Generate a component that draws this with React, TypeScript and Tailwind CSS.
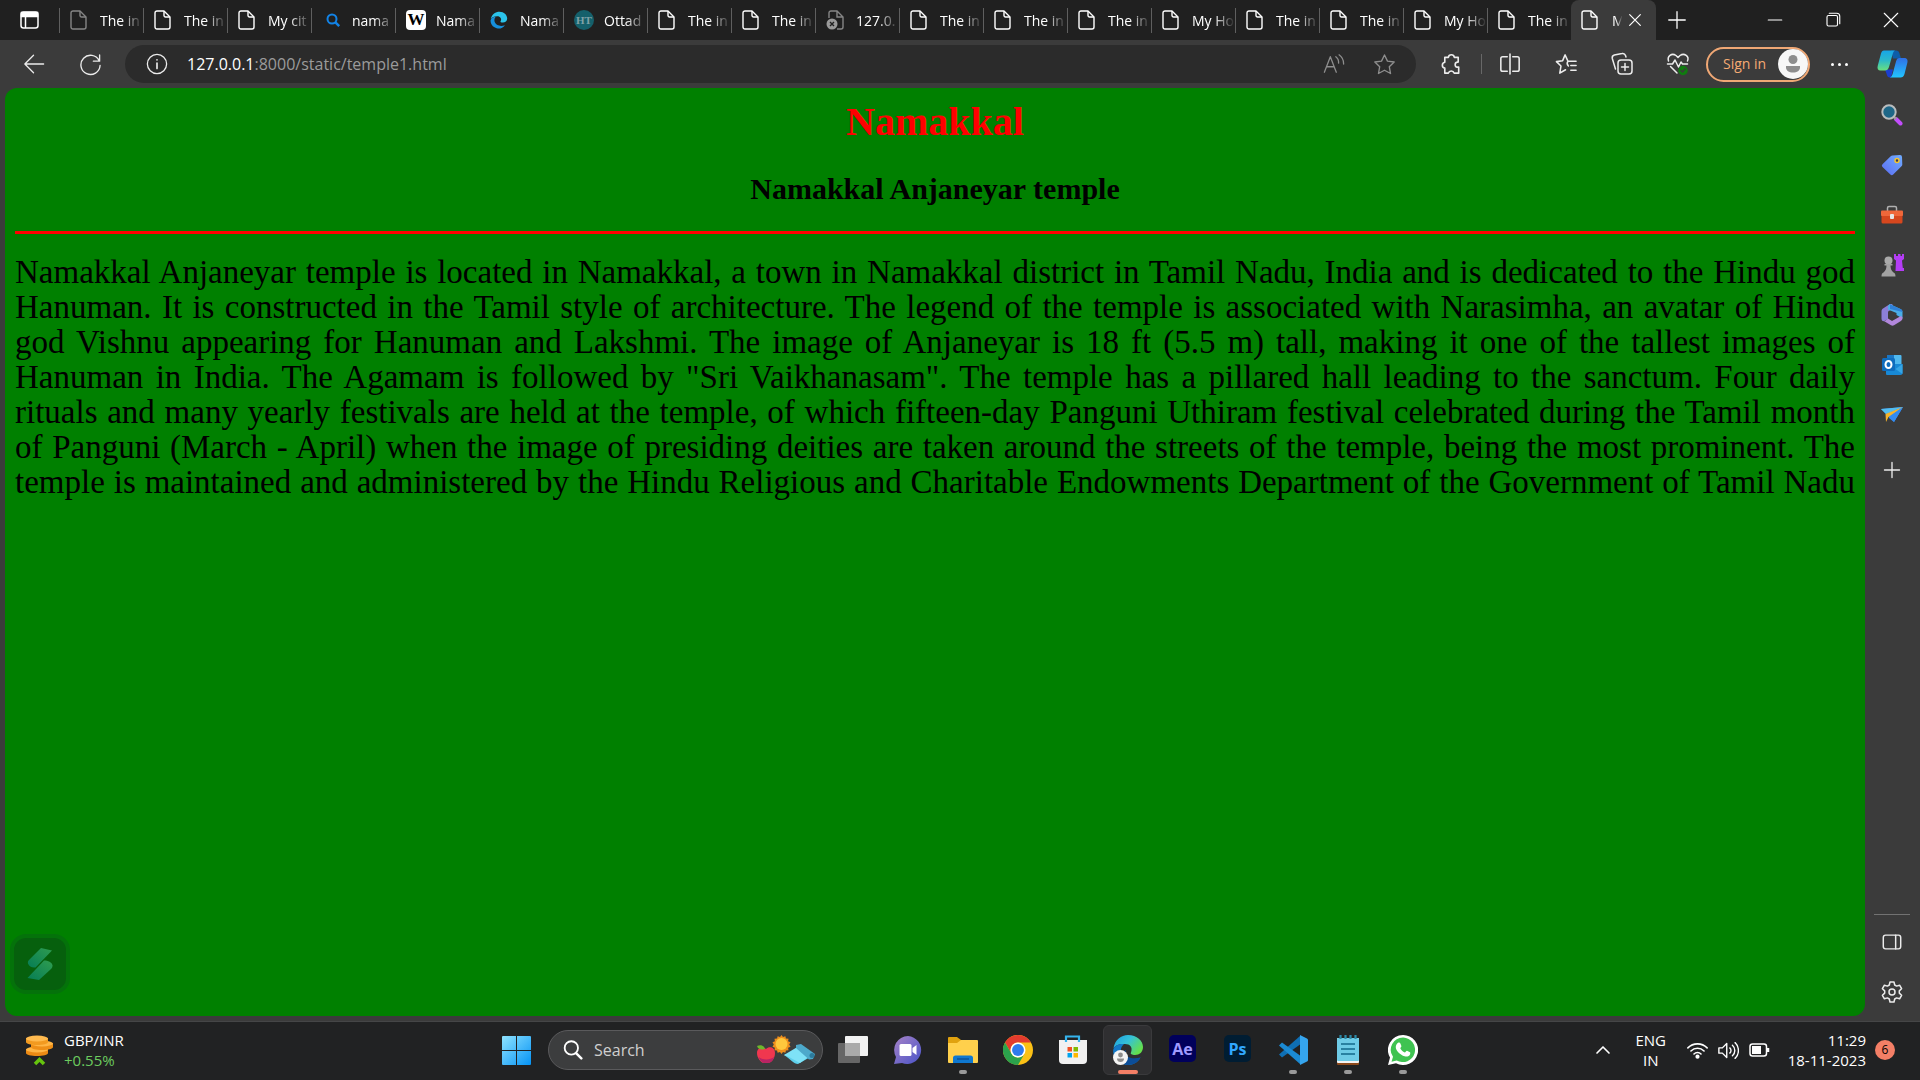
import type { ReactNode } from "react";

const LINES = [
  "Namakkal Anjaneyar temple is located in Namakkal, a town in Namakkal district in Tamil Nadu, India and is dedicated to the Hindu god",
  "Hanuman. It is constructed in the Tamil style of architecture. The legend of the temple is associated with Narasimha, an avatar of Hindu",
  "god Vishnu appearing for Hanuman and Lakshmi. The image of Anjaneyar is 18 ft (5.5 m) tall, making it one of the tallest images of",
  'Hanuman in India. The Agamam is followed by "Sri Vaikhanasam". The temple has a pillared hall leading to the sanctum. Four daily',
  "rituals and many yearly festivals are held at the temple, of which fifteen-day Panguni Uthiram festival celebrated during the Tamil month",
  "of Panguni (March - April) when the image of presiding deities are taken around the streets of the temple, being the most prominent. The",
  "temple is maintained and administered by the Hindu Religious and Charitable Endowments Department of the Government of Tamil Nadu",
];

type TabKind = "page" | "dim" | "search" | "wiki" | "edge" | "ht" | "error";

const TABS: { kind: TabKind; title: string }[] = [
  { kind: "dim", title: "The in" },
  { kind: "page", title: "The in" },
  { kind: "page", title: "My cit" },
  { kind: "search", title: "nama" },
  { kind: "wiki", title: "Nama" },
  { kind: "edge", title: "Nama" },
  { kind: "ht", title: "Ottad" },
  { kind: "page", title: "The in" },
  { kind: "page", title: "The in" },
  { kind: "error", title: "127.0." },
  { kind: "page", title: "The in" },
  { kind: "page", title: "The in" },
  { kind: "page", title: "The in" },
  { kind: "page", title: "My Ho" },
  { kind: "page", title: "The in" },
  { kind: "page", title: "The in" },
  { kind: "page", title: "My Ho" },
  { kind: "page", title: "The in" },
];

function Line({ size = 24, w = 1.4, children }: { size?: number; w?: number; children: ReactNode }) {
  return (
    <svg width={size} height={size} viewBox="0 0 24 24" fill="none" stroke="currentColor" strokeWidth={w} strokeLinecap="round" strokeLinejoin="round" aria-hidden="true" className="shrink-0">
      {children}
    </svg>
  );
}

function PageIcon() {
  return (
    <svg width="17" height="20" viewBox="0 0 17 20" fill="none" stroke="currentColor" strokeWidth="1.4" strokeLinejoin="round" className="shrink-0" aria-hidden="true">
      <path d="M1 3a2 2 0 0 1 2-2h7l6 6v10a2 2 0 0 1-2 2H3a2 2 0 0 1-2-2Z" />
      <path d="M10 1v4.500a1.500 1.500 0 0 0 1.500 1.500H16" />
    </svg>
  );
}

function TabIcon({ kind }: { kind: TabKind }) {
  if (kind === "page") return <span className="text-white"><PageIcon /></span>;
  if (kind === "dim") return <span className="text-[#858585]"><PageIcon /></span>;
  if (kind === "search")
    return (
      <svg width="20" height="20" viewBox="0 0 20 20" fill="none" stroke="#1283e6" strokeWidth="2" aria-hidden="true" className="shrink-0">
        <circle cx="10" cy="9" r="4.500" />
        <path d="m13.200 12.200 4 4" strokeWidth="2.500" />
      </svg>
    );
  if (kind === "wiki")
    return <span className="flex size-5 shrink-0 items-center justify-center rounded-sm bg-white font-['Liberation_Serif',serif] text-[17px] font-bold text-black">W</span>;
  if (kind === "edge")
    return (
      <svg width="18" height="18" viewBox="0 0 18 18" aria-hidden="true" className="shrink-0">
        <path d="M.8 8C2 3 5.500.8 9.500.8c4.500 0 7.700 3.200 7.700 6.700 0 2.600-2 4-4.300 4-1.700 0-2.900-.5-2.300-1.300 1.500-2.300-.3-5-3.300-5C4 5.200 1.800 6.500.8 8Z" fill="#2bc3ea" />
        <path d="M.6 9.200C1 7 3.300 5.800 5.800 5.800 4.300 7.300 4 9.500 5 11.600c1.500 3 5.500 4.200 10 2.600C12 18.500 7.500 18 4.500 16.300 1.800 14.700.3 12 .6 9.200Z" fill="#168fdc" />
      </svg>
    );
  if (kind === "ht")
    return <span className="flex size-5 shrink-0 items-center justify-center rounded-full bg-[#15606b] font-['Liberation_Serif',serif] text-[11px] font-bold text-[#7ea1a6]">HT</span>;
  return (
    <svg width="18" height="20" viewBox="0 0 18 20" fill="none" stroke="#858585" strokeWidth="1.400" aria-hidden="true" className="shrink-0">
      <path d="M3 8V3a2 2 0 0 1 2-2h6l6 6v10a2 2 0 0 1-2 2h-4M11 1v6h6" />
      <circle cx="6" cy="14" r="5.500" fill="#9a9a9a" stroke="none" />
      <path d="m4 12 4 4m0-4-4 4" stroke="#222" />
    </svg>
  );
}

function TabStrip() {
  return (
    <div className="flex h-10 items-stretch bg-[#202020] text-white">
      <button aria-label="Tab actions" className="flex w-[59px] shrink-0 items-center justify-center">
        <svg width="19" height="18" viewBox="0 0 19 18" fill="none" stroke="white" strokeWidth="1.500" aria-hidden="true">
          <rect x="1" y="1" width="17" height="16" rx="2.500" />
          <path d="M1.500 1.500h16v4h-16z" fill="white" />
          <path d="M5.500 6v11" />
        </svg>
      </button>
      {TABS.map((t, i) => (
        <button key={i} className="flex min-w-0 flex-[0_1_84px] items-center">
          <span className="h-[25px] w-px shrink-0 bg-[#5f5f5f]" />
          <span className="ml-[10px] flex w-5 shrink-0 items-center"><TabIcon kind={t.kind} /></span>
          <span className="ml-[10px] min-w-0 flex-1 overflow-hidden whitespace-nowrap text-left text-[14px] mask-r-from-50% mask-r-to-100%">{t.title}</span>
        </button>
      ))}
      <div className="flex w-[85px] shrink-0 items-center rounded-t-lg bg-[#3b3b3b] pl-[10px]">
        <PageIcon />
        <span className="ml-[14px] w-[13px] overflow-hidden text-[14px] mask-r-from-30% mask-r-to-80%">M</span>
        <button aria-label="Close tab" className="ml-[2px]"><Line size={16} w={1.800}><path d="m4 4 16 16M20 4 4 20" /></Line></button>
      </div>
      <button aria-label="New tab" className="flex w-[41px] shrink-0 items-center justify-center"><Line size={22} w={1.400}><path d="M12 3v18M3 12h18" /></Line></button>
      <div className="flex-1" />
      <button aria-label="Minimize" className="flex w-[58px] shrink-0 items-center justify-center"><Line size={18} w={1.500}><path d="M3 12h18" /></Line></button>
      <button aria-label="Restore" className="flex w-[58px] shrink-0 items-center justify-center">
        <Line size={18} w={1.500}><rect x="4" y="6" width="14" height="14" rx="2" /><path d="M7 3h10a4 4 0 0 1 4 4v10" /></Line>
      </button>
      <button aria-label="Close" className="flex w-[58px] shrink-0 items-center justify-center"><Line size={18} w={1.500}><path d="m3 3 18 18M21 3 3 21" /></Line></button>
    </div>
  );
}

function Tool({ label, children }: { label: string; children: ReactNode }) {
  return <button aria-label={label} className="flex h-10 w-14 shrink-0 items-center justify-center">{children}</button>;
}

function Copilot() {
  return (
    <svg width="31" height="28" viewBox="0 0 31 28" aria-hidden="true">
      <defs>
        <linearGradient id="cpA" x1="0" y1="0" x2="0" y2="1"><stop offset="0" stopColor="#17a5e8" /><stop offset=".5" stopColor="#2cb9c9" /><stop offset="1" stopColor="#6ae07e" /></linearGradient>
        <linearGradient id="cpB" x1="0" y1="0" x2="0" y2="1"><stop offset="0" stopColor="#2f6fe6" /><stop offset="1" stopColor="#22c5ff" /></linearGradient>
      </defs>
      <path d="M14 .5h5c2 0 3 1 3.500 3l1.500 5h-8Z" fill="#0d5da8" />
      <path d="M8 19.500h8l-2 8h-1c-2 0-2.700-1-3.200-3Z" fill="#1b3fd0" />
      <path d="M7 .5h11c-1.600.8-2 2.500-2.600 4.500L12 17c-.8 2.500-2 3.500-4 3.500H3.500C1 20.500 0 18.500.7 16L4 3.500C4.600 1.500 5.500.5 7 .5Z" fill="url(#cpA)" />
      <path d="M22.500 8H27c3 0 4 2 3.400 4.500L27.500 24c-.7 2.500-2 3.500-4 3.500H13c1.800-.8 2.300-2.300 2.900-4.500L19 11.500C19.700 9 20.600 8 22.500 8Z" fill="url(#cpB)" />
    </svg>
  );
}

function Toolbar() {
  return (
    <div className="flex h-12 items-center pl-[6px] text-[#ececec]">
      <Tool label="Back"><Line size={22}><path d="M22.500 12H2.500M11.500 2.500 2 12l9.500 9.500" /></Line></Tool>
      <Tool label="Reload"><Line size={23}><path d="M21 8a10 10 0 1 0 1 5M21.500 2v6.500H15" /></Line></Tool>
      <div className="ml-[7px] flex h-[38px] flex-1 items-center rounded-full bg-[#2b2b2b] pl-[21px]">
        <button aria-label="Site information"><Line size={22}><circle cx="12" cy="12" r="10.500" /><path d="M12 11v6M12 7.400v.2" strokeWidth="1.800" /></Line></button>
        <div className="ml-[19px] flex-1 text-base text-[#9b9b9b]" role="textbox" aria-label="Address" tabIndex={0}>
          <span className="text-white">127.0.0.1</span>:8000/static/temple1.html
        </div>
        <button aria-label="Read aloud" className="flex w-[50px] justify-center text-[#8e8e8e]">
          <Line size={22}><path d="m1.500 21 6.500-17 6.500 17M4 15h8M14 4a8 8 0 0 1 3 7M17.500 2a12 12 0 0 1 5 10" /></Line>
        </button>
        <button aria-label="Add to favorites" className="mr-[7px] flex w-[50px] justify-center text-[#8e8e8e]">
          <Line size={23}><path d="m12 2 3.100 6.500 7 .9-5.100 4.900 1.300 7.100L12 18l-6.300 3.400L7 14.300 1.900 9.400l7-.9Z" /></Line>
        </button>
      </div>
      <span className="w-[7px]" />
      <Tool label="Extensions">
        <Line size={23} w={1.700}><path d="M5 4.500h3.700a3.200 3.200 0 0 1 6.300 0h4V9.500h-1a2.700 2.700 0 0 0 0 5.300h1.500V21h-4.700a3.200 3.200 0 0 0-6.100 0H5v-5.200a3.100 3.100 0 0 1 0-6.100Z" /></Line>
      </Tool>
      <span className="ml-[2px] h-5 w-px bg-[#686868]" />
      <Tool label="Split screen"><Line size={22} w={1.700}><path d="M9 4H4a2 2 0 0 0-2 2v12a2 2 0 0 0 2 2h5M15 4h5a2 2 0 0 1 2 2v12a2 2 0 0 1-2 2h-5M12 1v22" /></Line></Tool>
      <Tool label="Favorites"><Line size={23} w={1.600}><path d="M14 8.500h8M16.500 13H22M16.500 18H22M13 7.500 10.500 2 8 8l-6.500 1 4.700 4.600L5 21l6-3.500M13.500 8.500c-1 1.500-1 3.500.5 5" /></Line></Tool>
      <Tool label="Collections"><Line size={24} w={1.500}><rect x="8" y="8" width="14" height="14" rx="3" /><path d="M15 11.500v7M11.500 15h7M5.500 17 2.300 6.500a3 3 0 0 1 2-3.500L12 1.500a3 3 0 0 1 3.500 2L16 5" /></Line></Tool>
      <Tool label="Browser essentials">
        <Line size={24} w={1.500}>
          <path d="M2.500 9C1 4.500 5.500.5 10 3.500l2 2 2-2c4.500-3 9.500 1 7.500 5.500M1.500 12h5L9 8l3.500 7L15 10l1.500 2h5M4.500 14.500 11 21" />
          <circle cx="17" cy="18.500" r="4" fill="#107c10" stroke="#107c10" /><path d="m15 18.500 1.500 1.500 2.500-3" stroke="#3b3b3b" />
        </Line>
      </Tool>
      <button className="flex h-[35px] w-[104px] shrink-0 items-center justify-between rounded-full border-2 border-[#f0a875] pl-[15px] text-sm text-[#f5aa74]">
        <span className="whitespace-nowrap">Sign in</span>
        <svg width="30" height="30" viewBox="0 0 30 30" aria-hidden="true" className="shrink-0">
          <circle cx="15" cy="15" r="15" fill="#f7f7f7" /><circle cx="15" cy="10.500" r="4.500" fill="#8d8d8d" />
          <path d="M8 17h14v1.500c0 3-3 5-7 5s-7-2-7-5Z" fill="#8d8d8d" />
        </svg>
      </button>
      <button aria-label="Settings and more" className="flex h-10 w-[55px] shrink-0 items-center justify-center gap-1 pl-1">
        <span className="size-[3px] rounded-full bg-white" /><span className="size-[3px] rounded-full bg-white" /><span className="size-[3px] rounded-full bg-white" />
      </button>
      <button aria-label="Copilot" className="flex w-[55px] shrink-0 items-center justify-center"><Copilot /></button>
    </div>
  );
}

function SideButton({ label, children }: { label: string; children: ReactNode }) {
  return <button aria-label={label} className="flex h-[50px] w-full items-center justify-center">{children}</button>;
}

function Sidebar() {
  return (
    <div className="flex w-[55px] shrink-0 flex-col items-center pt-[2px] pr-[1px] pb-1 text-[#ececec]">
      <SideButton label="Search">
        <svg width="22" height="22" viewBox="0 0 22 22" aria-hidden="true"><path d="m15 15 4.500 4.500" stroke="#c24dfb" strokeWidth="4" strokeLinecap="round" /><path d="m12 12 3 3" stroke="#999" strokeWidth="2.500" /><circle cx="8" cy="8" r="6.700" fill="#1e6788" stroke="#b9bcbe" strokeWidth="2" /></svg>
      </SideButton>
      <SideButton label="Shopping">
        <svg width="22" height="22" viewBox="0 0 22 22" aria-hidden="true"><defs><linearGradient id="tag" x1="0" y1="1" x2="1" y2="0"><stop stopColor="#5b6cf2" /><stop offset="1" stopColor="#70adff" /></linearGradient></defs><path d="M11.500 1.500 19 1a2 2 0 0 1 2 2l.3 7.500c0 .8-.3 1.300-.8 1.800l-8.300 8.300a2 2 0 0 1-2.800 0L1.500 13a2 2 0 0 1 0-2.800l8.200-8c.5-.5 1-.7 1.800-.7Z" fill="url(#tag)" /><circle cx="16" cy="6.500" r="2" fill="#3a3a55" stroke="#f4c430" strokeWidth="1.500" /></svg>
      </SideButton>
      <SideButton label="Tools">
        <svg width="24" height="20" viewBox="0 0 24 20" aria-hidden="true"><path d="M7.500 6V3a1.500 1.500 0 0 1 1.500-1.500h6A1.500 1.500 0 0 1 16.500 3v3" fill="none" stroke="#b0b0b0" strokeWidth="1.500" /><rect x="1.500" y="6" width="21" height="12.500" rx="1.500" fill="#d6471e" /><rect x="1" y="5.500" width="22" height="5.500" rx="1" fill="#f0673a" /><rect x="10" y="9" width="4" height="5" rx="1" fill="#e5e5e5" /></svg>
      </SideButton>
      <SideButton label="Games">
        <svg width="23" height="23" viewBox="0 0 23 23" aria-hidden="true"><path d="M13 0h2v2h2V0h2.500v2h1.500V0H23v5l-2 1.500.8 7.500H23v3h-8.500L15 6.500 13 5Z" fill="#b43df5" /><circle cx="7.500" cy="6.500" r="4" fill="#aaa" /><path d="M3.500 10h8v1.500h-2c0 3 .8 5 3 7 1.300.5 2 1.700 2 4H.5c0-2.300.7-3.500 2-4 2.200-2 3-4 3-7h-2Z" fill="#a2a2a2" /></svg>
      </SideButton>
      <SideButton label="Microsoft 365">
        <svg width="22" height="22" viewBox="0 0 22 22" aria-hidden="true"><path d="M9 0 2 4.500C1 5.200.5 6 .5 7.500v7c0 2 1 3 3 2.500l3.500-2V8.500C7 7 8 6.500 10 6l2-4c0-1.500-1.500-2.500-3-2Z" fill="#8c7fd8" /><path d="M9 .2 19.500 5c1.300.7 2 1.500 2 3v6.500l-6-3.500V9L7 5.500V3C7 1.500 8 .5 9 .2Z" fill="#4aaee8" /><path d="M2 16.500 10 21.300c1 .5 2 .5 3 0l6.500-4c1.500-1 2-2 2-3.300s-1-2.300-2.500-1.500L11 17 7 14.500 4 17Z" fill="#b287dc" /><path d="M9 .2 19.500 5c1.300.7 2 1.500 2 3L9 5Z" fill="#2f80d8" /></svg>
      </SideButton>
      <SideButton label="Outlook">
        <svg width="22" height="22" viewBox="0 0 22 22" aria-hidden="true"><rect x="6" y="1" width="14.500" height="12" rx="1" fill="#50b8ee" /><path d="M6 1h7v6H6z" fill="#1b76c4" /><path d="M5 10h16.500v9a2 2 0 0 1-2 2H6a1 1 0 0 1-1-1Z" fill="#1889d6" /><path d="m21.500 10-7 5 7 5Z" fill="#35a5e5" /><rect x="1" y="4" width="13" height="13" rx="1.500" fill="#0f6cbd" /><ellipse cx="7.500" cy="10.500" rx="3" ry="3.500" fill="none" stroke="#fff" strokeWidth="2" /></svg>
      </SideButton>
      <SideButton label="Drop">
        <svg width="24" height="20" viewBox="0 0 24 20" aria-hidden="true"><path d="M1 4 23 2 14 17Z" fill="#2f8df5" /><path d="M1 4 23 2 6 9Z" fill="#53bdf0" /><path d="M5.500 9 23 2 8.500 12 6 17Z" fill="#f6b42a" /><path d="M9 12 23 2 14 17 9 13Z" fill="#338bf0" /></svg>
      </SideButton>
      <div className="h-[5px]" />
      <SideButton label="Customize"><Line size={20} w={1.600}><path d="M12 3v18M3 12h18" /></Line></SideButton>
      <div className="flex-1" />
      <div className="mb-[2px] h-px w-9 bg-[#727272]" />
      <SideButton label="Hide sidebar"><Line size={22} w={1.600}><rect x="2.500" y="4.500" width="19" height="15" rx="2.500" /><path d="M16 4.500v15" /></Line></SideButton>
      <SideButton label="Settings">
        <Line size={24} w={1.500}><circle cx="12" cy="12" r="3" /><path d="M10 2h4l.7 3 1.900 1.100 3-.9 2 3.500-2.300 2.200v2.200l2.300 2.200-2 3.500-3-.9-1.900 1.100-.7 3h-4l-.7-3-1.900-1.100-3 .9-2-3.500 2.300-2.200v-2.200L2.400 8.700l2-3.500 3 .9L9.300 5Z" /></Line>
      </SideButton>
    </div>
  );
}

function Article() {
  return (
    <main className="relative flex-1 rounded-xl bg-[#008000] px-[10px] pt-[11px] font-['Liberation_Serif',serif] text-black">
      <h1 className="text-center text-[40px] leading-[45px] font-bold text-[#ff0000]">Namakkal</h1>
      <h2 className="mt-7 text-center text-[30px] leading-[34px] font-bold">Namakkal Anjaneyar temple</h2>
      <hr className="mt-[25px] h-[3px] border-0 bg-[#ff0000]" />
      <p className="mt-[21px] text-[33px] leading-[35px]">
        {LINES.map((l) => (
          <span key={l} className="block text-justify [text-align-last:justify]">{l}</span>
        ))}
      </p>
      <button aria-label="Open assistant" className="absolute bottom-[22px] left-[5px] flex size-[60px] items-center justify-center rounded-2xl border-4 border-[#04720a] bg-[#06600d]">
        <svg width="26" height="34" viewBox="0 0 26 34" aria-hidden="true">
          <defs><linearGradient id="ext" x1="1" y1="0" x2="0" y2="1"><stop stopColor="#2f9c50" /><stop offset="1" stopColor="#067d55" /></linearGradient></defs>
          <path d="m14 1 11 2.500L8.500 20.500C5 21 2 19.500 1 16.500c-.3-1.500 0-2.500 1-3.500Z" fill="url(#ext)" />
          <path d="M12 33 .5 31 17 13.500c4 0 8 1.500 8.500 5 0 1.500-.5 2.500-1.500 3.500Z" fill="url(#ext)" />
        </svg>
      </button>
    </main>
  );
}

function TaskApp({ label, dot, active, children }: { label: string; dot?: boolean; active?: boolean; children: ReactNode }) {
  return (
    <button aria-label={label} className="relative flex h-[50px] w-[55px] shrink-0 items-center justify-center">
      {active && <span className="absolute inset-y-0 inset-x-[3px] rounded-md border border-[#3a3a3c] bg-[#2f2f31]" />}
      <span className="relative">{children}</span>
      {dot && <span className="absolute bottom-[1px] h-1 w-2 rounded-full bg-[#9a9a9a]" />}
      {active && <span className="absolute bottom-[1px] h-1 w-5 rounded-full bg-[#f47f66]" />}
    </button>
  );
}

function Taskbar() {
  return (
    <footer className="flex h-[59px] shrink-0 items-center border-t border-[#454647] bg-[#212223] pb-[2px] text-[15px] text-white">
      <div className="flex flex-1 items-center">
        <button className="ml-[25px] flex items-center gap-[10px] text-left">
          <svg width="29" height="32" viewBox="0 0 29 32" aria-hidden="true">
            <path d="M1 15v4c0 2 5 3 11 3s11-1 11-3v-4Z" fill="#ec8a14" /><ellipse cx="12" cy="15.500" rx="11" ry="3" fill="#ffb545" />
            <path d="M6 9v4c0 2 5 3 11 3s11-1 11-3V9Z" fill="#ee8f17" /><ellipse cx="17" cy="9.500" rx="11" ry="3" fill="#ffb545" />
            <path d="M1 4v4c0 2 5 3 11 3s11-1 11-3V4Z" fill="#f29a20" /><ellipse cx="12" cy="4.500" rx="11" ry="3" fill="#ffba4f" />
            <path d="m10 30 4.500-4.500L19 30" fill="none" stroke="#66c40e" strokeWidth="3.500" />
          </svg>
          <span><span className="block leading-5">GBP/INR</span><span className="block leading-5 text-[#6ccb5f]">+0.55%</span></span>
        </button>
      </div>
      <div className="flex shrink-0 items-center pr-[2px]">
        <button aria-label="Start" className="flex h-[50px] w-[60px] items-center justify-center pr-[3px]">
          <svg width="29" height="29" viewBox="0 0 29 29" aria-hidden="true"><defs><linearGradient id="win" x1="0" y1="0" x2="29" y2="29" gradientUnits="userSpaceOnUse"><stop stopColor="#8fe3ff" /><stop offset="1" stopColor="#0593f5" /></linearGradient></defs><path d="M0 1a1 1 0 0 1 1-1h13v14H0ZM15 0h13a1 1 0 0 1 1 1v13H15ZM0 15h14v14H1a1 1 0 0 1-1-1ZM15 15h14v13a1 1 0 0 1-1 1H15Z" fill="url(#win)" /></svg>
        </button>
        <label className="flex h-10 w-[275px] items-center rounded-full border border-[#5a5a5c] bg-[#3c3d3e] pr-[6px] pl-[14px]">
          <Line size={20} w={2.200}><circle cx="10" cy="9.500" r="8" /><path d="m16 16 6 6" strokeWidth="3" /></Line>
          <input aria-label="Search" placeholder="Search" className="ml-[11px] w-0 flex-1 bg-transparent text-base text-white outline-none placeholder:text-[#cfcfcf]" />
          <svg width="60" height="30" viewBox="0 0 60 30" aria-hidden="true">
            <path d="m25.500 0 1.500 2 2.400-.8.500 2.400 2.600.2-.4 2.500 2.400 1-1.300 2.200 1.300 2.200-2.400 1 .4 2.500-2.600.2-.5 2.400-2.400-.8-1.500 2-1.500-2-2.400.8-.5-2.400-2.600-.2.400-2.500-2.400-1 1.300-2.200-1.300-2.200 2.400-1-.4-2.500 2.600-.2.500-2.400 2.400.8Z" fill="#ef8f1c" />
            <circle cx="25.500" cy="9" r="6" fill="#ffc83d" />
            <path d="M10 14c3-3 9-2 9 4 0 6-4 10-7 10-1 0-2-.3-3 0-4 .5-8-5-8-10 0-5 5-7 9-4Z" fill="#f0374f" /><path d="M2.500 22c1.500 3.500 4 6.500 6.500 6 1-.3 2 0 3 0 2.500 0 5-2.500 6.200-6-4 3-11 3.500-15.700 0Z" fill="#b82465" /><path d="M1 11c3-1.500 7-1 8 3-3 1-7 .5-8-3Z" fill="#6cb82c" />
            <path d="m28 20 15-5 13 6-14 8c-4 0-8-5-14-9Z" fill="#5fd0ec" /><path d="m28 20 15-9 12 9-11 8c-3-1-9-6-16-8Z" fill="#7ee2f7" /><path d="m40 10 5-1 14 10-2 5-4 .5L40 13Z" fill="#4da9cb" /><circle cx="56" cy="20.500" r="2.500" fill="#2c7b9c" />
          </svg>
        </label>
        <span className="w-[2px]" />
        <TaskApp label="Task view"><svg width="30" height="30" viewBox="0 0 30 30" aria-hidden="true"><rect y="8" width="22" height="20" rx="1" fill="#666" /><rect x="7" y="1" width="23" height="20" rx="1" fill="#f2f2f2" /><path d="M7 8h15v13H7Z" fill="#aaa" /></svg></TaskApp>
        <TaskApp label="Chat"><svg width="30" height="30" viewBox="0 0 30 30" aria-hidden="true"><defs><linearGradient id="chat" x1="0" y1="0" x2="1" y2="1"><stop stopColor="#a783c7" /><stop offset="1" stopColor="#4953c8" /></linearGradient></defs><path d="M15 1a14 14 0 1 1-6 27l-8 1 2-7A14 14 0 0 1 15 1Z" fill="url(#chat)" /><rect x="6.500" y="9" width="12" height="12" rx="1.500" fill="#fff" /><path d="m19.500 13 4-3v10l-4-3Z" fill="#fff" /></svg></TaskApp>
        <TaskApp label="File Explorer" dot><svg width="30" height="30" viewBox="0 0 30 30" aria-hidden="true"><path d="M0 3a1 1 0 0 1 1-1h8l4 3v5H0Z" fill="#e0a20f" /><path d="M0 8h9l4-3h16a1 1 0 0 1 1 1v21a1 1 0 0 1-1 1H1a1 1 0 0 1-1-1Z" fill="#ffd04c" /><path d="M5 28v-5a2.500 2.500 0 0 1 2.500-2.500h15A2.500 2.500 0 0 1 25 23v5Z" fill="#0f78d0" /><path d="M9 24h12" stroke="#07498c" strokeWidth="1.200" /></svg></TaskApp>
        <TaskApp label="Chrome">
          <svg width="30" height="30" viewBox="0 0 48 48" aria-hidden="true"><circle cx="24" cy="24" r="24" fill="#fbc116" /><path d="M24 0a24 24 0 0 1 20.800 12H24a12 12 0 0 0-10.400 18L3.200 12A24 24 0 0 1 24 0Z" fill="#e33b2e" /><path d="M3.200 12a24 24 0 0 0 20.800 36l10.400-18a12 12 0 0 1-20.800 0Z" fill="#2ba24c" /><circle cx="24" cy="24" r="12" fill="#fff" /><circle cx="24" cy="24" r="9.500" fill="#2f7bed" /></svg>
        </TaskApp>
        <TaskApp label="Microsoft Store"><svg width="30" height="30" viewBox="0 0 30 30" aria-hidden="true"><path d="M8 7V1.500h13V7" fill="none" stroke="#35b4ee" strokeWidth="2.200" /><path d="M1 5h28v20a4 4 0 0 1-4 4H5a4 4 0 0 1-4-4Z" fill="#f1f1f1" /><path d="M8 7V5M21 7V5" stroke="#35b4ee" strokeWidth="2.200" /><path d="M9.500 12H14v4.500H9.500z" fill="#f25022" /><path d="M15.500 12H20v4.500h-4.500z" fill="#7fba00" /><path d="M9.500 18H14v4.500H9.500z" fill="#00a4ef" /><path d="M15.500 18H20v4.500h-4.500z" fill="#ffb900" /></svg></TaskApp>
        <TaskApp label="Microsoft Edge" active>
          <svg width="30" height="30" viewBox="0 0 30 30" aria-hidden="true"><defs><linearGradient id="ed" x1="0" y1="0" x2="1" y2=".6"><stop stopColor="#1b9de2" /><stop offset=".5" stopColor="#35c1d8" /><stop offset="1" stopColor="#64e04b" /></linearGradient></defs>
            <path d="M.5 13C2 5 8 0 15 0c9 0 15 6 15 12 0 5-3.500 8-8 8-3 0-5-1-4-2.500C20 12 17 9 12 9 7 8.500 3 10 .5 13Z" fill="url(#ed)" /><path d="M.2 15C1 11 5 8.500 11 9c-3 2.500-4 6-2.500 10.500C10.500 25 18 27.500 27.500 22.500 24 29 17 31.500 10 29 3.500 26.500-.5 21 .2 15Z" fill="#1278c8" /><path d="M13 15c-2 5 2 10 14.500 7.500C24 29 17 31 11.500 29.500 5 24 9 17 13 15Z" fill="#0b4d98" />
            <circle cx="7.500" cy="22.500" r="7.500" fill="#f4f4f4" /><circle cx="7.500" cy="20" r="2.400" fill="#8d8d8d" /><path d="M4 23.500h7c0 2.500-1.500 3.500-3.500 3.500S4 26 4 23.500Z" fill="#8d8d8d" /></svg>
        </TaskApp>
        <TaskApp label="After Effects"><span className="mb-[3px] flex size-[27px] items-center justify-center rounded-[5px] bg-[#00005b] font-['Open_Sans',sans-serif] text-base font-bold text-[#9f9bff]">Ae</span></TaskApp>
        <TaskApp label="Photoshop"><span className="mb-[3px] flex size-[27px] items-center justify-center rounded-[5px] bg-[#001d33] font-['Open_Sans',sans-serif] text-base font-bold text-[#31a8ff]">Ps</span></TaskApp>
        <TaskApp label="Visual Studio Code" dot><svg width="30" height="30" viewBox="0 0 30 30" aria-hidden="true"><path d="M1 19.500 22 1v8.500L4 22.500Z" fill="#0f6fb4" /><path d="m1 10.500 3-3 18 13V29Z" fill="#1b8ad3" /><path d="m22 0 7 3.500c.7.400 1 .8 1 1.500v20c0 .7-.3 1.200-1 1.500L22 30Z" fill="#35a5ee" /></svg></TaskApp>
        <TaskApp label="Notepad" dot><svg width="24" height="30" viewBox="0 0 24 30" aria-hidden="true"><rect x="1" y="3" width="22" height="27" rx="1" fill="#8d4a1c" /><rect x="1" y="3" width="22" height="25" rx="1" fill="#f4f4f4" /><rect x="1" y="3" width="22" height="23" rx="1" fill="#6ecbe6" /><path d="M5 9h14M5 14h14M5 19h14" stroke="#13698a" strokeWidth="1.600" /><path d="M4.500 0v4M9.500 0v4M14.500 0v4M19.500 0v4" stroke="#2b8aa8" strokeWidth="2.200" /></svg></TaskApp>
        <TaskApp label="WhatsApp" dot><svg width="30" height="30" viewBox="0 0 30 30" aria-hidden="true"><path d="M15 0a15 15 0 1 1-7 28.200L0 30l2-7.500A15 15 0 0 1 15 0Z" fill="#fff" /><path d="M15.200 2.500a12.300 12.300 0 1 1-6.500 23l-5.200 1.200L5 21.800A12.300 12.300 0 0 1 15.200 2.500Z" fill="#3fc351" /><path d="M10.500 7.500c.8-.3 1.500 0 1.900 1l1 2.400c.2.700-1 1.900-1.100 2.300.8 1.800 2.400 3.400 4.500 4.300.7 0 1.600-1.900 2.200-1.700l3 1.500c.6.400.2 2.200-.4 3-1 1-2.800 1.700-5 1-4.500-1.400-8.300-5.600-8.800-8.600-.3-2.300 1.200-4.600 2.700-5.200Z" fill="#fff" /></svg></TaskApp>
      </div>
      <div className="flex flex-1 items-center justify-end">
        <button aria-label="Show hidden icons" className="mr-4 flex w-[30px] justify-center"><Line size={18} w={2.200}><path d="m4 16 8-8 8 8" /></Line></button>
        <button className="mr-[19px] w-[34px] text-center leading-5">ENG<br />IN</button>
        <button aria-label="Network, volume and battery" className="mr-[18px] flex items-center gap-[10px]">
          <Line size={21} w={1.800}><path d="M1 9a15.500 15.500 0 0 1 22 0M4.500 12.500a10.600 10.600 0 0 1 15 0M8 16a5.600 5.600 0 0 1 8 0" /><circle cx="12" cy="19" r="1.500" fill="currentColor" /></Line>
          <Line size={21} w={1.600}><path d="M1 9v6h4l5 5V4L5 9ZM13.500 9a4 4 0 0 1 0 6M16.500 6a8 8 0 0 1 0 12M19.500 3a12.500 12.500 0 0 1 0 18" /></Line>
          <svg width="21" height="14" viewBox="0 0 21 14" fill="none" stroke="white" strokeWidth="1.500" aria-hidden="true"><rect x="1" y="1" width="16.500" height="12" rx="2.500" /><rect x="3" y="3" width="9" height="8" fill="white" stroke="none" /><path d="M19 5v4" strokeWidth="2.500" /></svg>
        </button>
        <button className="text-right leading-5 whitespace-nowrap">11:29<br />18-11-2023</button>
        <span className="mr-[25px] ml-[9px] flex size-5 shrink-0 items-center justify-center rounded-full bg-[#f47f66] text-xs text-black">6</span>
      </div>
    </footer>
  );
}

export default function App() {
  return (
    <div className="flex min-h-screen flex-col bg-[#3b3b3b] font-['Open_Sans','Noto_Sans',sans-serif]">
      <TabStrip />
      <Toolbar />
      <div className="flex flex-1">
        <div className="flex flex-1 pb-[5px] pl-[5px]"><Article /></div>
        <Sidebar />
      </div>
      <Taskbar />
    </div>
  );
}
